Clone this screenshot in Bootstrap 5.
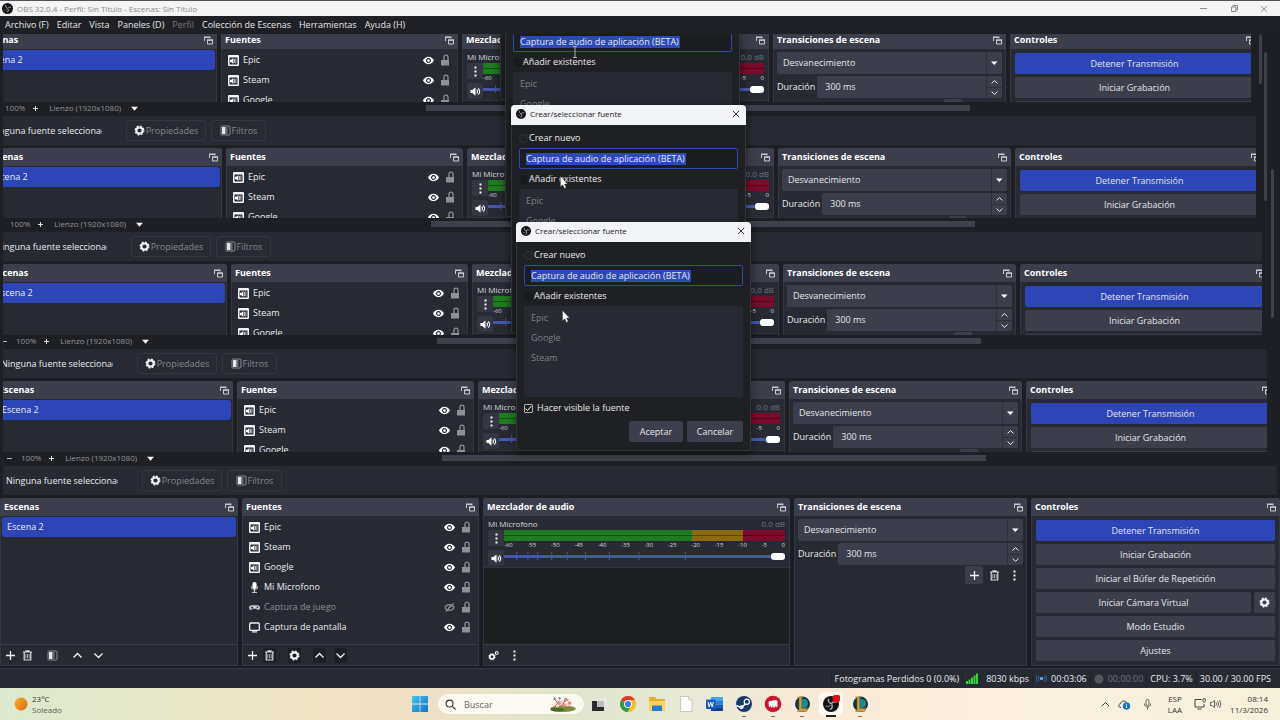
<!DOCTYPE html>
<html lang="es">
<head>
<meta charset="utf-8">
<meta name="viewport" content="width=device-width, initial-scale=1">
<title>OBS 32.0.4 - Perfil: Sin Título - Escenas: Sin Título</title>
<link href="https://cdn.jsdelivr.net/npm/bootstrap@5.3.0/dist/css/bootstrap.min.css" rel="stylesheet">
<style>
:root{--win:#1e1f24;--base:#272a33;--raise:#3c3f4b;--line:#3a3d49;--blue:#2c46b7;--dim:#8b8d94}
body{font-family:"Open Sans","Noto Sans",sans-serif;font-size:9px;line-height:12px;color:#e9eaee;background:#1b1d26;overflow-x:hidden}
svg{display:block;flex:none}
.ic{width:11px;height:11px}
.btn{--bs-btn-font-size:9px;--bs-btn-line-height:12px;--bs-btn-padding-x:0;--bs-btn-padding-y:0;--bs-btn-border-radius:2px;--bs-btn-color:#e4e5ea;--bs-btn-hover-color:#fff;--bs-btn-hover-bg:#4a4e5c;border:0;display:flex;align-items:center;justify-content:center}
.fs-small{font-size:8px}
/* window frame */
.caption{height:16px;background:#f4f4f5;color:#8b8b8b;border-top:1px solid #55515a;font-size:8px;padding:0 12px 0 2px}
.caption .winctl{gap:20px}
.caption button,.dlg-title button{background:none;border:0;padding:0;color:inherit}
.menus{height:18px;background:#1f2025;padding:0 5px;gap:8px}
.menus a{color:#e4e5e8;text-decoration:none}
.menus a.off{color:#75767b}
/* preview */
.preview{background:var(--win);overflow:hidden}
.stack{margin-top:-3px}
.pane{margin:0 var(--edge) 0 3px;overflow:hidden}
.pane>.inner{width:100vw;margin-left:calc(-3px - var(--shift))}
.zoombar{height:14px;color:#93949a;font-size:8px;--edge:0px}
.zoombar .inner{padding-bottom:2px}
.zoombar .tools{flex:0 0 34.5%;padding-left:6px}
.zoombar .hbar{flex:0 0 42.5%;height:6px;background:#3e404b}
.zoombar button{background:none;border:0;padding:0;color:#dcdde0}
.pct{margin:0 7px 0 8px}
.canv{margin:0 9px 0 10px}
.context{height:29px;background:var(--base);margin-bottom:3px}
.context .inner{height:29px;padding-left:6px}
.context .what{width:112px;overflow:hidden;white-space:nowrap;flex:none}
.context .btn{height:21px;border:1px solid #343740;color:#85878e;gap:1px;border-radius:3px}
.context .prop{width:80px;margin:0 5px 0 24px}
.context .filt{width:55px}
.vbar{width:3px;background:#3e404b;border-radius:2px}
/* docks */
.docks{display:grid;grid-template-columns:238fr 237fr 307fr 233fr 249fr;gap:4px;height:168px}
.dock{background:var(--base);border:1px solid #343741;border-top:0;border-radius:3px 3px 0 0;min-width:0;display:flex;flex-direction:column}
.dock-head{height:18px;background:var(--raise);color:#fff;padding:0 4px;margin:0 -1px;border-radius:3px 3px 0 0;display:flex;justify-content:space-between;align-items:center;flex:none}
.dock-head h2{font-size:9px;line-height:18px;font-weight:700;margin:0;white-space:nowrap}
.dock-foot{height:21px;border-top:1px solid var(--line);display:flex;align-items:center;padding-left:3px;margin-top:auto;flex:none}
.dock-foot .btn{width:13px;height:15px}
.sunk .btn{background:var(--win)}
.scene{height:20px;background:var(--blue);border-radius:3px;margin:1px 1px 0;padding:0 5px;color:#e9eaf5;display:flex;align-items:center;text-decoration:none}
.srcs{padding-top:1px}
.src{height:20px;padding:0 7px 0 6px}
.src.off{color:var(--dim)}
.src .lock{margin-left:6px;color:#8e9097}
.mixer{height:52px;padding:1px 4px 0;border-bottom:1px solid #31343d}
.mixer .btn{width:16px;height:16px;background:#343741}
.mixer .fs-small{line-height:13px}
.mixer label{color:#d9dadf}
.meter{height:11px;background:linear-gradient(90deg,#207a20 67%,#8a6a10 67% 85%,#7c0a2a 85%)}
.meter i{display:block;height:1px;background:rgba(0,0,0,.35);position:relative;top:5px}
.scale{font-size:6px;line-height:8px;height:8px;color:#d5d6db}
.volume{height:10px;margin-top:2px}
.volume svg{width:100%;height:10px}
.volume input{-webkit-appearance:none;appearance:none;inset:0;width:100%;height:10px;margin:0;background:none;position:absolute}
.volume input::-webkit-slider-runnable-track{height:3px;background:#4656b0}
.volume input::-webkit-slider-thumb{-webkit-appearance:none;width:14px;height:7px;border-radius:3px;background:#fff;margin-top:-2px}
.mixvoid{background:#1e1f22;flex:1}
.trans{padding:3px 3px 0}
.form-select{font-size:9px;line-height:12px;height:22px;padding:0 6px;border:0;border-radius:2px;color:#e4e5ea;background:url("data:image/svg+xml,%3Csvg xmlns='http://www.w3.org/2000/svg' width='16' height='22'%3E%3Cpath d='M.5 0v22' stroke='%232d303a'/%3E%3Cpath d='M5 9.500h6.500l-3.250 3.500z' fill='%23fff'/%3E%3C/svg%3E") right center/16px 22px no-repeat var(--raise)}
.dur{height:24px;margin-top:1px}
.tacts{gap:2px}
.spinbox{height:22px;background:var(--raise);border-radius:2px;margin-left:2px}
.spinbox input{background:none;border:0;color:#e4e5ea;padding:0 8px;min-width:0}
.spinbox .steps{width:16px;border-left:1px solid #2d303a}
.spinbox .btn{height:11px;border-radius:0}
.spinbox .btn+.btn{border-top:1px solid #2d303a}
.tbtn{width:18px;height:18px}
.tbtn.lit{background:var(--raise)}
.ctl{padding:4px 4px 0;gap:3px;display:flex;flex-direction:column}
.ctl .btn{height:21px;background:var(--raise)}
.ctl .btn.go{background:var(--blue)}
.ctl .gearbtn{width:21px;margin-left:3px}
/* dialogs */
.dlg{position:absolute;width:235px;height:229px;background:#1f2023;border:1px solid #343539;border-top:0;border-radius:4px;box-shadow:0 3px 10px rgba(0,0,0,.45)}
.dlg-title{height:20px;margin:0 -1px;background:#f3f4f7;color:#1c1c1c;border-radius:4px 4px 0 0;font-size:8px;padding:0 6px 2px 5px}
.dlg-body{padding:5px 7px 0}
.dlg .opt{display:flex;align-items:center}
.dlg .r1{height:16px}
.dlg .r2{height:20px}
.dlg .r3{height:22px}
.dlg input[type=radio]{appearance:none;width:9px;height:9px;border:1px solid #33343a;border-radius:50%;margin:0 1px 0 0}
.dlg input[type=radio]:checked{border-color:#191a1d;background:#191a1d}
.dlg input[type=checkbox]{appearance:none;width:9px;height:9px;border:1px solid #a9aaad;border-radius:1px;margin:0 4px 0 0;background:url("data:image/svg+xml,%3Csvg xmlns='http://www.w3.org/2000/svg' viewBox='0 0 9 9'%3E%3Cpath d='M1.500 4.500l2 2 4-4.500' fill='none' stroke='%23fff'/%3E%3C/svg%3E") center/9px no-repeat}
.dlg input[type=text]{height:21px;width:100%;border:1px solid #2e49a8;border-radius:2px;color:#e7e8ee;padding:0 6px;margin-top:2px;display:block;background:linear-gradient(#2d49b8,#2d49b8) 6px center/160px 12px no-repeat #1c1d21}
.dlg ul{height:91px;background:var(--base);border-radius:2px;padding:2px 7px;color:#7f8187}
.dlg li{line-height:20px}
.dlg .btn{height:21px;background:var(--raise)}
.dlg .acts{margin-top:2px;gap:4px}
.dlg .ok{width:54px}
.dlg .no{width:56px}
.ptr{position:absolute;pointer-events:none}
/* status and taskbar */
.status{height:20px;border-top:1px solid #343741;background:var(--base);margin-top:2px;padding-right:6px}
.status>div{padding:0 3px;border-left:1px solid #1f2128;display:flex;align-items:center}
.taskbar{display:grid;grid-template-columns:1fr auto 1fr;align-items:center;height:32px;color:#333;background:linear-gradient(90deg,#dce9d0,#f1e4c2 25%,#f0dfc4 31%,#dfe4cc 44%,#e6e8d6 52%,#faead8 65%,#faefdf 80%,#f5f0dc);font-size:8px;line-height:11px}
.taskbar .place{padding-left:14px}
.apps{gap:11px}
.apps>button{background:none;border:0;padding:0;position:relative}
.apps>button.run::after{content:"";position:absolute;left:7px;bottom:-4px;width:4px;height:1px;background:#777}
.apps>button.act{background:#fff9f1;box-shadow:0 0 0 3px #fff9f1;border-radius:2px}
.apps>button.act::after{left:4px;width:10px;height:2px;background:#222}
.apps svg{width:18px;height:18px}
.find{width:146px;height:20px;background:#fcf9f2;border-radius:10px;padding:0 4px 0 7px;margin-right:-5px;margin-left:-2px}
.find input{background:none;border:0;outline:0;width:91px;padding:0 0 0 8px;font-size:9px;color:#555}
.find input::placeholder{color:#666}
.find .lens{width:11px;height:11px}
.find .bloom{width:30px;height:17px}
</style>
</head>
<body>
<svg width="0" height="0" class="position-absolute" aria-hidden="true">
<symbol id="i-pop" viewBox="0 0 9 9"><path d="M.5 5V1.500H6V2.500M0 1h6.500" fill="none" stroke="#c9cad0"/><path d="M3 4h6M3.500 4v4h5V4" fill="none" stroke="#c9cad0"/><path d="M3 3.500h6v1.300H3z" fill="#c9cad0"/></symbol>
<symbol id="i-app" viewBox="0 0 11 11"><path fill="#f4f4f6" fill-rule="evenodd" d="M1 0h9a1 1 0 0 1 1 1v9a1 1 0 0 1-1 1H1a1 1 0 0 1-1-1V1a1 1 0 0 1 1-1zm.5 2.500v7h8v-7z"/><path d="M2 4.700h1.400L5.400 3v6L3.400 7.300H2z" fill="#fff"/><path d="M6.500 4v4M7.900 3.500v5" stroke="#c0c1c7"/></symbol>
<symbol id="i-mic" viewBox="0 0 11 11"><rect x="3.400" y="0" width="4.200" height="7" rx="2.100" fill="#fff"/><path d="M2.300 4.500c0 4.300 6.400 4.300 6.400 0M5.500 7.500V10M3 10.400h5" fill="none" stroke="#d8d9dd"/></symbol>
<symbol id="i-pad" viewBox="0 0 12 11"><path fill="#c9cad0" fill-rule="evenodd" d="M3 3h6c2 0 3 1.200 3 2.800S10.500 8.500 9.300 8L7.800 6.800H4.200L2.700 8C1.500 8.500 0 7.400 0 5.800S1 3 3 3zm0 1.300-.1 1H2v.9h.9v.7h.8v-.7h.8v-.9h-.8v-1zM9.200 4.500a.8.800 0 1 0 .1 0z"/></symbol>
<symbol id="i-mon" viewBox="0 0 11 11"><rect x=".7" y="1" width="9.600" height="7.400" rx="1" fill="none" stroke="#f1f1f4" stroke-width="1.300"/><path d="M3 9.900h5" stroke="#f1f1f4" stroke-width="1.200"/></symbol>
<symbol id="i-eye" viewBox="0 0 12 11"><path fill="#fff" fill-rule="evenodd" d="M6 1.500c3 0 5 2 6 4-1 2-3 4-6 4s-5-2-6-4c1-2 3-4 6-4zm0 1.300a2.700 2.700 0 1 0 .01 0z"/><circle cx="6" cy="5.500" r="1.500" fill="#fff"/></symbol>
<symbol id="i-off" viewBox="0 0 12 11"><path d="M1 5.500c2-4.300 8-4.300 10 0-2 4.300-8 4.300-10 0M2 10l8.500-9M4.500 6.500L7 4" fill="none" stroke="#8d8f96" stroke-width="1.300"/></symbol>
<symbol id="i-lock" viewBox="0 0 10 12"><rect x="1" y="6" width="8" height="5.500" fill="currentColor"/><path d="M4 6V3c0-2.600 4-2.600 4 0v3" fill="none" stroke="currentColor" stroke-width="1.300"/></symbol>
<symbol id="i-plus" viewBox="0 0 11 11"><path d="M5.500 1v9M1 5.500h9" stroke="#f4f4f6" stroke-width="1.300"/></symbol>
<symbol id="i-trash" viewBox="0 0 11 11"><path d="M1 2h9M4 1.500V.8h3v.7M2.200 2.500V10h6.600V2.500" fill="none" stroke="#d9dadf" stroke-width="1.200"/><path d="M3.800 4v4.500M5.500 4v4.500M7.200 4v4.500" stroke="#b5b6bc" stroke-width=".9"/></symbol>
<symbol id="i-filt" viewBox="0 0 11 11"><rect x="1" y="1" width="9" height="9" rx="1" fill="none" stroke="#8b8d94"/><path d="M2 2h3.500v7H2z" fill="#e4e5e9"/><path d="M6 2h1.500v7H6z" fill="#6d6f77"/></symbol>
<symbol id="i-up" viewBox="0 0 11 11"><path d="M1.500 7.500l4-4 4 4" fill="none" stroke="#f4f4f6" stroke-width="1.300"/></symbol>
<symbol id="i-dn" viewBox="0 0 11 11"><path d="M1.500 3.500l4 4 4-4" fill="none" stroke="#f4f4f6" stroke-width="1.300"/></symbol>
<symbol id="i-gear" viewBox="0 0 11 11"><circle cx="5.500" cy="5.500" r="3.100" fill="none" stroke="#f4f4f6" stroke-width="2"/><circle cx="5.500" cy="5.500" r="4.300" fill="none" stroke="#f4f4f6" stroke-width="1.400" stroke-dasharray="1.900 1.477"/></symbol>
<symbol id="i-gears" viewBox="0 0 11 11"><circle cx="4" cy="6.800" r="2.200" fill="none" stroke="#f4f4f6" stroke-width="1.700"/><circle cx="4" cy="6.800" r="3.300" fill="none" stroke="#f4f4f6" stroke-width=".8" stroke-dasharray="1.300 1.290"/><circle cx="8.700" cy="2.900" r="1.400" fill="none" stroke="#f4f4f6" stroke-width="1.100"/></symbol>
<symbol id="i-dots" viewBox="0 0 11 11"><path d="M4.500 .5h2v2h-2zM4.500 4.500h2v2h-2zM4.500 8.500h2v2h-2z" fill="#f4f4f6"/></symbol>
<symbol id="i-vol" viewBox="0 0 12 11"><path d="M.5 3.800h2L6 1v9L2.500 7.200h-2z" fill="#fff"/><path d="M7.400 3.500q1.500 2 0 4M9 2q3 3.500 0 7" fill="none" stroke="#fff" stroke-width="1.200"/></symbol>
<symbol id="i-x" viewBox="0 0 9 9"><path d="M1 1l7 7M8 1L1 8" stroke="currentColor" fill="none"/></symbol>
<symbol id="i-car" viewBox="0 0 8 8"><path d="M1 2.500h6L4 6z" fill="#fff"/></symbol>
<symbol id="i-obs" viewBox="0 0 20 20"><circle cx="10" cy="10" r="10" fill="#111215"/><path d="M7 3.500c-1 3 .2 5 3 5.800M16.700 8c-2.300-1.200-5-.8-6.300 2M8.500 17c3-.8 4-3.800 2.300-6.500" fill="none" stroke="#a9aab0" stroke-width="1.800"/><path d="M3.500 12c1.500 1.800 4.500 1.600 6-1" fill="none" stroke="#777" stroke-width="1.500"/></symbol>
<symbol id="i-ptr" viewBox="0 0 8 13"><path d="M.5.500v10.200l2.300-2 1.700 3.700 1.700-.8-1.700-3.500h3z" fill="#fff" stroke="#333" stroke-width=".4"/></symbol>
<symbol id="i-lol" viewBox="0 0 18 18"><circle cx="9.500" cy="9" r="7.500" fill="#12383f"/><circle cx="10.500" cy="8.500" r="4.500" fill="#1b8c94"/><path d="M4.500 2H10L8.700 3.500v9.800h4.800l1.500-1-1.500 4.200h-9l1.500-1.700V3.500z" fill="#c8a04a" stroke="#7d5a1e" stroke-width=".5"/></symbol>
</svg>

<header class="caption d-flex align-items-center">
  <svg class="ic me-1"><use href="#i-obs"/></svg>
  <span>OBS 32.0.4 - Perfil: Sin Título - Escenas: Sin Título</span>
  <div class="winctl d-flex align-items-center ms-auto">
    <button aria-label="Minimizar"><svg class="ic" viewBox="0 0 11 11"><path d="M2 5.500h7" stroke="currentColor"/></svg></button>
    <button aria-label="Restaurar"><svg class="ic" viewBox="0 0 11 11"><path d="M2.500 4h4.500v4.500H2.500zM4 4V2.500h4.500V7H7" fill="none" stroke="currentColor"/></svg></button>
    <button aria-label="Cerrar"><svg width="8" height="8"><use href="#i-x"/></svg></button>
  </div>
</header>
<nav class="menus d-flex align-items-center" aria-label="Menú principal">
  <a href="#">Archivo (F)</a><a href="#">Editar</a><a href="#">Vista</a><a href="#">Paneles (D)</a><a href="#" class="off">Perfil</a><a href="#">Colección de Escenas</a><a href="#">Herramientas</a><a href="#">Ayuda (H)</a>
</nav>

<main>
  <section class="preview position-relative" id="preview" aria-label="Vista previa">
    <div class="stack" id="stack"></div>
  </section>
  <div id="live"></div>
</main>

<footer>
  <div class="status d-flex justify-content-end">
    <div>Fotogramas Perdidos 0 (0.0%)</div>
    <div><svg class="me-2" width="12" height="11" viewBox="0 0 12 11"><path d="M0 8h2v3H0zM2.500 6.500h2V11h-2zM5 4.500h2V11H5zM7.500 2.500h2V11h-2zM10 .5h2V11h-2z" fill="#36d23c"/></svg>8030 kbps</div>
    <div><svg class="me-1" width="11" height="9" viewBox="0 0 11 9"><circle cx="5.500" cy="4.500" r="1.700" fill="#58a5ee"/><path d="M3 2q-1.500 2.500 0 5M8 2q1.500 2.500 0 5M1.300 .8q-2 3.700 0 7.400M9.700 .8q2 3.700 0 7.400" fill="none" stroke="#2f68b0" stroke-width=".9"/></svg>00:03:06</div>
    <div class="text-secondary"><svg class="me-1" width="10" height="10"><circle cx="5" cy="5" r="4.500" fill="#55575f"/></svg>00:00:00</div>
    <div>CPU: 3.7%</div>
    <div>30.00 / 30.00 FPS</div>
  </div>
  <div class="taskbar">
    <div class="place d-flex align-items-center">
      <svg width="14" height="14" class="me-1"><defs><linearGradient id="sun" x2="1" y2="1"><stop stop-color="#f6b629"/><stop offset="1" stop-color="#df6418"/></linearGradient></defs><circle cx="7" cy="7" r="6.500" fill="url(#sun)"/></svg>
      <div>23°C<br><span class="opacity-75">Soleado</span></div>
    </div>
    <div class="apps d-flex align-items-center">
      <button aria-label="Inicio"><svg viewBox="0 0 18 18"><defs><linearGradient id="wn" x2="1" y2="1"><stop stop-color="#45c3f0"/><stop offset="1" stop-color="#0b74cf"/></linearGradient></defs><path d="M1 1h7.600v7.600H1zM9.400 1H17v7.600H9.400zM1 9.400h7.600V17H1zM9.400 9.400H17V17H9.400z" fill="url(#wn)"/></svg></button>
      <div class="find d-flex align-items-center">
        <svg class="lens" viewBox="0 0 12 12"><circle cx="5" cy="5" r="3.800" fill="none" stroke="#333" stroke-width="1.200"/><path d="M8 8l3.500 3.500" stroke="#333" stroke-width="1.300"/></svg>
        <input type="text" placeholder="Buscar" aria-label="Buscar">
        <svg class="bloom" viewBox="0 0 30 18"><ellipse cx="16" cy="13.500" rx="13.500" ry="3.500" fill="#7d8c3c"/><ellipse cx="10" cy="14.500" rx="7" ry="2" fill="#4f6828"/><path d="M7 12L12 5M11 8L7 3M14 11l5-8M17 6l5-2M21 12l3-6" stroke="#8a5b3a" fill="none"/><g fill="#e98f84"><circle cx="12" cy="7.500" r="2"/><circle cx="17" cy="9.500" r="2.200"/><circle cx="19" cy="3.500" r="1.800"/><circle cx="23" cy="7.500" r="2"/></g><g fill="#f7cfc5"><circle cx="15" cy="5.500" r="1.300"/><circle cx="21" cy="10" r="1.500"/><circle cx="10" cy="11" r="1.300"/></g><path d="M7 1l2 3-3 0zM11 1l1 3 2-2z" fill="#4f8240"/></svg>
      </div>
      <button aria-label="Vista de tareas"><svg viewBox="0 0 18 18"><path d="M7 3h10v9H7z" fill="#e8e8e6"/><path d="M2 6h6v6h6v4H2z" fill="#2c2c2c"/><path d="M7 6h7v6H7z" fill="#bcbcba"/></svg></button>
      <button aria-label="Chrome"><svg viewBox="0 0 18 18"><circle cx="9" cy="9" r="8" fill="#f2bf1e"/><path d="M9 9L2.100 5A8 8 0 0 1 15.900 5H9z" fill="#e0392c"/><path d="M9 9L2.100 5A8 8 0 0 0 8.500 17l3.500-6z" fill="#2d9b48"/><circle cx="9" cy="9" r="4" fill="#fff"/><circle cx="9" cy="9" r="3.100" fill="#3f7fe8"/></svg></button>
      <button aria-label="Explorador"><svg viewBox="0 0 18 18"><path d="M1 3q0-1 1-1h5l2 2h7q1 0 1 1v11H1z" fill="#e8ae2d"/><path d="M1 6h16v9q0 1-1 1H2q-1 0-1-1z" fill="#fbd25a"/><path d="M4 11.500q0-1 1-1h8q1 0 1 1V16H4z" fill="#1f7fd0"/></svg></button>
      <button aria-label="Documento"><svg viewBox="0 0 18 18"><path d="M3.500 1.500h8l3.500 3.500v11.500H3.500z" fill="#fdfdfb" stroke="#b9b9b4" stroke-width=".7"/><path d="M11.500 1.500V5H15" fill="none" stroke="#b9b9b4" stroke-width=".7"/></svg></button>
      <button aria-label="Word"><svg viewBox="0 0 18 18"><path d="M5 2h11q1 0 1 1v3H5z" fill="#41a5ee"/><path d="M5 6h12v3.500H5z" fill="#2b7cd3"/><path d="M5 9.500h12V13H5z" fill="#185abd"/><path d="M5 13h12v2q0 1-1 1H5z" fill="#103f91"/><rect x="0" y="4.500" width="9.500" height="9.500" rx="1" fill="#185abd"/><path d="M2 6.800l1.200 5 1.500-4.500 1.500 4.500 1.200-5" fill="none" stroke="#fff"/></svg></button>
      <button aria-label="Steam" class="run"><svg viewBox="0 0 18 18"><circle cx="9" cy="9" r="8" fill="#123a6b"/><path d="M1.200 10.500l5 2 6-5" stroke="#fff" stroke-width="1.600" fill="none"/><circle cx="6.500" cy="12.300" r="2" fill="#fff"/><circle cx="11.800" cy="6.800" r="2.600" fill="#123a6b" stroke="#fff" stroke-width="1.200"/></svg></button>
      <button aria-label="Riot" class="run"><svg viewBox="0 0 18 18"><circle cx="9" cy="9" r="8.300" fill="#d0112b"/><path d="M4.500 6.500l7.500-1.700 1.500 1.400v5.300l-1.500 1-.3-2.500-.6 2.500H9.300L9 10l-.7 2.500H6.800L6.300 10l-.5 2-1-.5z" fill="#fff"/></svg></button>
      <button aria-label="League of Legends" class="run"><svg><use href="#i-lol"/></svg></button>
      <button aria-label="OBS Studio" class="run act"><svg viewBox="0 0 18 18"><use href="#i-obs" x="1" y="1" width="16" height="16"/><circle cx="14.500" cy="3.500" r="4" fill="#ea0f16"/></svg></button>
      <button aria-label="League of Legends, cliente" class="run"><svg><use href="#i-lol"/></svg></button>
    </div>
    <div class="d-flex align-items-center justify-content-end pe-2 me-1 text-end">
      <svg width="9" height="9" viewBox="0 0 9 9"><path d="M1 6l3.500-3.500L8 6" fill="none" stroke="#333"/></svg>
      <svg class="ms-2 me-2" width="13" height="11" viewBox="0 0 13 11"><path d="M3 8.500C0 8.500 0 5 2.500 4.700 3 1.500 7.500 1 9 4" fill="none" stroke="#444"/><circle cx="8.500" cy="7" r="3.700" fill="#1477cf"/><path d="M8.500 6.300V9M8.500 4.800v.8" stroke="#fff"/></svg>
      <svg class="ms-1" width="9" height="11" viewBox="0 0 9 11"><rect x="3" y=".5" width="3" height="6" rx="1.500" fill="none" stroke="#444" stroke-width=".8"/><path d="M1.300 4.500c0 4.500 6.400 4.500 6.400 0M4.500 8v2.500" fill="none" stroke="#444" stroke-width=".8"/></svg>
      <div class="text-center ms-3 me-2 pe-1">ESP<br>LAA</div>
      <svg class="me-1" width="12" height="12" viewBox="0 0 12 12"><path d="M7.500 1.500H1v7.500h9V6M3.500 11h4" fill="none" stroke="#444"/><path d="M9 .8h2.300V3.500L10.200 4.500 9 3.500z" fill="none" stroke="#444" stroke-width=".9"/></svg>
      <svg width="12" height="10" viewBox="0 0 12 10"><path d="M.5 3.500h1.700L4.500 1.500v7L2.200 6.500H.5zM6 3.500q1 1.500 0 3M7.700 2.300q2 2.700 0 5.400M9.500 1q3 4 0 8" fill="none" stroke="#555" stroke-width=".9"/></svg>
      <div class="ms-2">08:14<br>11/3/2026</div>
    </div>
  </div>
</footer>

<script src="https://cdn.jsdelivr.net/npm/bootstrap@5.3.0/dist/js/bootstrap.bundle.min.js"></script>
<script>
const ic = (id, cls = '', w = 11, h = 11) => `<svg class="${cls}" width="${w}" height="${h}" aria-hidden="true"><use href="#i-${id}"/></svg>`;
const ib = (id, label, cls = '') => `<button class="btn ${cls}" aria-label="${label}">${ic(id)}</button>`;
const head = t => `<div class="dock-head"><h2>${t}</h2>${ic('pop', '', 9, 9)}</div>`;

const sources = [['app','Epic'],['app','Steam'],['app','Google'],['mic','Mi Microfono'],['pad','Captura de juego',1],['mon','Captura de pantalla']];
const ticks = [4.5, 8.5, 12, 17, 22.5, 29, 37.5, 48, 64.5];

/* cut = true builds the short docks of the nested captures, which show only their top rows */
function docks(cut) {
  const list = cut ? sources.slice(0, 3) : sources;
  const seen = n => !cut || n === -60 || n >= -5;
  return `<div class="docks">
  <section class="dock">${head('Escenas')}
    <a href="#" class="scene">Escena 2</a>
    ${cut ? '' : `<div class="dock-foot">${ib('plus','Añadir escena')}${ib('trash','Eliminar escena','ms-1 me-2')}${ib('filt','Filtros de escena','ms-1 me-2')}${ib('up','Subir','ms-1 me-1')}${ib('dn','Bajar','ms-1')}</div>`}
  </section>
  <section class="dock">${head('Fuentes')}
    <div class="srcs">${list.map(s => `<div class="src d-flex align-items-center ${s[2] ? 'off' : ''}">${ic(s[0], 'me-1')}<span>${s[1]}</span>${ic(s[2] ? 'off' : 'eye', 'ms-auto')}${ic('lock', 'lock', 10, 12)}</div>`).join('')}</div>
    ${cut ? '' : `<div class="dock-foot sunk">${ib('plus','Añadir fuente','bg-transparent')}${ib('trash','Eliminar fuente','ms-1 me-2')}${ib('gear','Propiedades de la fuente','ms-1 me-2')}${ib('up','Subir','ms-1 me-1')}${ib('dn','Bajar','ms-1')}</div>`}
  </section>
  <section class="dock">${head('Mezclador de audio')}
    <div class="mixer">
      <div class="d-flex justify-content-between fs-small"><label>Mi Microfono</label><span class="text-secondary">0.0 dB</span></div>
      <div class="d-flex">
        <div class="d-flex flex-column gap-1">${ib('dots','Opciones de audio')}${ib('vol','Silenciar')}</div>
        <div class="flex-fill">
          <div class="meter"><i></i></div>
          <div class="scale d-flex justify-content-between">${[-60,-55,-50,-45,-40,-35,-30,-25,-20,-15,-10,-5,0].map(n => `<span class="${seen(n) ? '' : 'invisible'}">${n}</span>`).join('')}</div>
          <div class="volume position-relative"><svg>${ticks.map(t => `<line x1="${t}%" x2="${t}%" y1="1" y2="9" stroke="#4656a0"/>`).join('')}</svg><input type="range" min="0" max="100" value="100" aria-label="Volumen de Mi Microfono"></div>
        </div>
      </div>
    </div>
    <div class="mixvoid"></div>
    ${cut ? '' : `<div class="dock-foot">${ib('gears','Propiedades avanzadas','me-1')}${ib('dots','Menú del mezclador','ms-1')}</div>`}
  </section>
  <section class="dock">${head('Transiciones de escena')}
    <div class="trans">
      <select class="form-select" aria-label="Transición"><option>Desvanecimiento</option></select>
      <div class="d-flex align-items-center dur"><label>Duración</label>
        <div class="spinbox d-flex flex-fill"><input class="flex-fill" value="300 ms" aria-label="Duración">
          <div class="steps d-flex flex-column"><button class="btn" aria-label="Más">${ic('up','',9,8)}</button><button class="btn" aria-label="Menos">${ic('dn','',9,8)}</button></div></div></div>
      <div class="tacts d-flex justify-content-end"><button class="btn tbtn lit" aria-label="Añadir transición">${ic('plus')}</button><button class="btn tbtn" aria-label="Eliminar transición">${ic('trash')}</button><button class="btn tbtn" aria-label="Opciones de transición">${ic('dots')}</button></div>
    </div>
  </section>
  <section class="dock">${head('Controles')}
    <div class="ctl">
      <button class="btn go">Detener Transmisión</button><button class="btn">Iniciar Grabación</button>
      ${cut ? '<button class="btn" aria-label="Iniciar el Búfer de Repetición"></button>' : `<button class="btn">Iniciar el Búfer de Repetición</button>
      <div class="d-flex"><button class="btn flex-fill">Iniciar Cámara Virtual</button><button class="btn gearbtn" aria-label="Configurar cámara virtual">${ic('gear')}</button></div>
      <button class="btn">Modo Estudio</button><button class="btn">Ajustes</button>`}
    </div>
  </section></div>`;
}
const zoombar = () => `<div class="zoombar pane"><div class="inner d-flex align-items-center h-100">
  <div class="tools d-flex align-items-center"><button aria-label="Alejar"><svg width="7" height="7"><path d="M1 3.500h5" stroke="#b9bac0"/></svg></button><span class="pct">100%</span><button aria-label="Acercar"><svg width="7" height="7"><path d="M1 3.500h5M3.500 1v5" stroke="#dcdde0"/></svg></button><span class="canv">Lienzo (1920x1080)</span><button aria-label="Escala">${ic('car','',9,9)}</button></div>
  <div class="hbar"></div></div></div>`;
const context = () => `<div class="context pane"><div class="inner d-flex align-items-center"><span class="what">Ninguna fuente seleccionada</span>
  <button class="btn prop">${ic('gear')}Propiedades</button><button class="btn filt">${ic('filt')}Filtros</button></div></div>`;

/* each nested capture sits a little further left than the one in front of it */
const levels = [{shift:0, edge:3}, {shift:5, edge:13}, {shift:11, edge:18}, {shift:16, edge:24, h:70}, {shift:21, edge:29}];
const vars = l => `--shift:${l.shift}px;--edge:${l.edge}px`;
let html = '';
for (let n = 4; n > 0; n--) {
  html += `<div class="pane" style="${vars(levels[n])};height:${levels[n].h || 71}px"><div class="inner">${docks(true)}</div></div>
  <div style="${vars(levels[n - 1])}">${zoombar()}${context()}</div>`;
}
document.getElementById('stack').innerHTML = html;
document.getElementById('live').innerHTML = docks(false);

/* i = 0 is the front dialog; the ones behind it show their upper rows, the last only its frame */
const dialog = (i, dx, y) => `<div class="dlg" role="dialog" aria-label="Crear/seleccionar fuente" style="left:calc(50% - ${dx}px);top:${y}px">
  ${i < 2 ? `<div class="dlg-title d-flex align-items-center">${ic('obs','me-1',10,10)}<span>Crear/seleccionar fuente</span><button class="ms-auto" aria-label="Cerrar">${ic('x','',8,8)}</button></div>` : '<div class="dlg-title"></div>'}
  ${i > 2 ? '' : `<div class="dlg-body"><label class="opt r1">${i < 2 ? `<input type="radio" name="m${i}">Crear nuevo` : ''}</label>
  <input type="text" value="Captura de audio de aplicación (BETA)" aria-label="Nombre">
  <label class="opt r2"><input type="radio" name="m${i}" checked>Añadir existentes</label>
  <ul class="list-unstyled m-0"><li>Epic</li><li>Google</li>${i ? '' : '<li>Steam</li>'}</ul>
  ${i ? '' : `<label class="opt r3"><input type="checkbox" checked>Hacer visible la fuente</label>
  <div class="acts d-flex justify-content-end"><button class="btn ok">Aceptar</button><button class="btn no">Cancelar</button></div>`}</div>`}</div>`;
document.getElementById('preview').insertAdjacentHTML('beforeend',
  dialog(3, 140, -163) + dialog(2, 135, -46) + dialog(1, 129, 71) + dialog(0, 124, 188) +
  `<svg class="ptr" style="left:calc(50% - 80px);top:142px" width="8" height="13"><use href="#i-ptr"/></svg>
   <svg class="ptr" style="left:calc(50% - 78px);top:276px" width="8" height="13"><use href="#i-ptr"/></svg>
   <svg class="ptr" style="left:calc(50% - 68px);top:12px" width="6" height="12"><path d="M1 .5h4M1 11.500h4M3 .5v11" stroke="#aab" fill="none"/></svg>
   <div class="vbar position-absolute" style="right:18px;top:0;height:50px"></div>
   <div class="vbar position-absolute" style="right:13px;top:18px;height:149px"></div>
   <div class="vbar position-absolute" style="right:6px;top:135px;height:149px"></div>`);
</script>
</body>
</html>
